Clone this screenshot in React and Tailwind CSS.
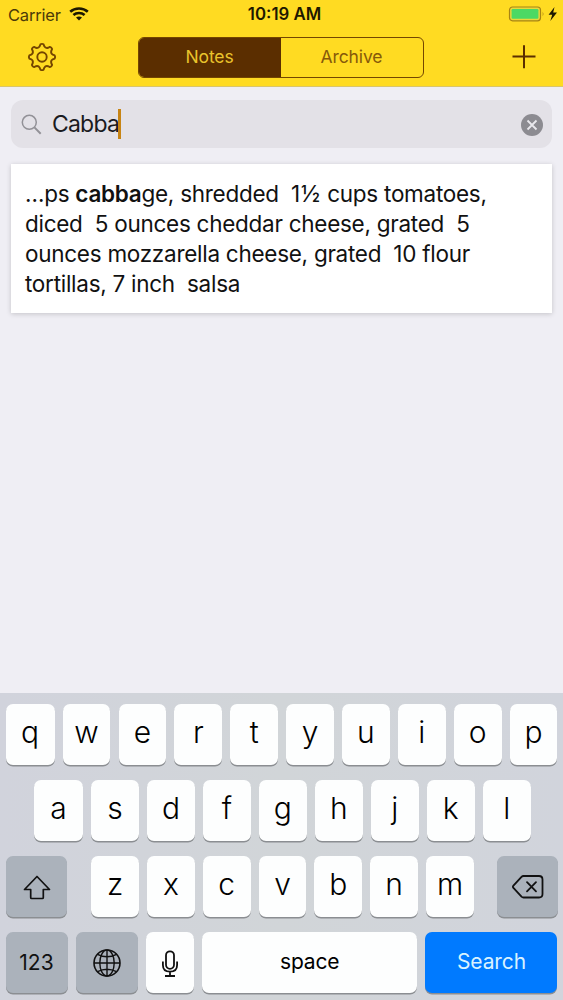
import React, { useState } from "react";

const ROW_ONE = ["q", "w", "e", "r", "t", "y", "u", "i", "o", "p"];
const ROW_TWO = ["a", "s", "d", "f", "g", "h", "j", "k", "l"];
const ROW_THREE = ["z", "x", "c", "v", "b", "n", "m"];

// eight teeth with soft valleys between them
function gearPath(cx, cy) {
  const at = (r, deg) => {
    const a = (deg * Math.PI) / 180;
    return `${(cx + r * Math.cos(a)).toFixed(2)} ${(cy + r * Math.sin(a)).toFixed(2)}`;
  };
  let d = `M${at(12.8, -7)}`;
  for (let i = 0; i < 8; i++) {
    const t = i * 45;
    d += `Q${at(13.6, t)} ${at(12.8, t + 7)}L${at(11, t + 12)}Q${at(9.3, t + 22.5)} ${at(11, t + 33)}L${at(12.8, t + 38)}`;
  }
  return d + "Z";
}

function GearIcon() {
  return (
    <svg width="30" height="30" viewBox="0 0 30 30" fill="none" stroke="#744600" strokeWidth="1.9" strokeLinejoin="round">
      <path d={gearPath(15, 15)} />
      <circle cx="15" cy="15" r="4.7" />
    </svg>
  );
}

function WifiIcon() {
  return (
    <svg width="20" height="14" viewBox="0 0 20 14" fill="none" stroke="#1d1800" strokeWidth="2.6">
      <path d="M1.2 4.7C6 .4 14 .4 18.8 4.7" />
      <path d="M4.400 8C7.500 5.300 12.500 5.300 15.600 8" />
      <path d="M10 13.500L7 10.600Q10 8.200 13 10.600Z" fill="#1d1800" stroke="none" />
    </svg>
  );
}

function BatteryIcon() {
  return (
    <svg width="50" height="16" viewBox="0 0 50 16">
      <rect x="1.5" y="1" width="31" height="13.8" rx="3" fill="#e9d83a" stroke="#a88314" strokeWidth="1.2" />
      <rect x="3.6" y="3.1" width="26.8" height="9.6" rx="1.2" fill="#4cd964" />
      <path d="M34.7 5.5q1.6 2.4 0 4.800z" fill="#a88314" />
      <path d="M46.500 1L40.600 8.800H44.200L42.300 15L49 6.600H45.200Z" fill="#1d1800" />
    </svg>
  );
}

function ShiftIcon() {
  return (
    <svg width="28" height="26" viewBox="0 0 28 26" fill="none" stroke="#111" strokeWidth="1.7" strokeLinejoin="round">
      <path d="M14 1.500L26.500 14.500H20.300V22.500Q20.300 23.500 19.300 23.500H8.700Q7.700 23.500 7.700 22.500V14.500H1.500Z" />
    </svg>
  );
}

function DeleteIcon() {
  return (
    <svg width="32" height="24" viewBox="0 0 32 24" fill="none" stroke="#111" strokeWidth="1.8" strokeLinejoin="round" strokeLinecap="round">
      <path d="M11.500 1H27Q30.500 1 30.500 4.500V19Q30.500 22.500 27 22.500H11.500Q10.300 22.500 9.500 21.700L1.200 12.700Q.6 11.800 1.200 10.900L9.500 1.800Q10.300 1 11.500 1Z" />
      <path d="M15 7.200L24 16.400M24 7.200L15 16.400" />
    </svg>
  );
}

function GlobeIcon() {
  return (
    <svg width="28" height="28" viewBox="0 0 28 28" fill="none" stroke="#111" strokeWidth="1.4">
      <circle cx="14" cy="14" r="13" strokeWidth="1.6" />
      <ellipse cx="14" cy="14" rx="7.2" ry="13" />
      <path d="M14 1V27M1 14H27M4.500 5.300Q14 10.300 23.500 5.300M4.500 22.700Q14 17.700 23.500 22.700" />
    </svg>
  );
}

function MicIcon() {
  return (
    <svg width="18" height="28" viewBox="0 0 18 28" fill="none" stroke="#111" strokeWidth="1.8">
      <rect x="5" y="1.300" width="8" height="17.500" rx="4" />
      <path d="M1.900 11.500V15Q1.900 21.700 9 21.700Q16.100 21.700 16.100 15V11.500M9 22V26M4 26H14" />
    </svg>
  );
}

function LetterKey({ letter, onPress }) {
  return (
    <button
      onClick={() => onPress(letter)}
      className="flex h-[61px] w-[47.700px] shrink-0 items-center justify-center rounded-[7px] bg-[#fdfefe] pb-[6px] text-[30px] leading-none font-[350] text-black shadow-[0_1.500px_0_#8b8e92]"
    >
      {letter}
    </button>
  );
}

export default function App() {
  const [query, setQuery] = useState("Cabba");
  const [tab, setTab] = useState("notes");

  const press = (letter) => setQuery(query + letter);
  const tabClass = (name) =>
    tab === name ? "flex-1 bg-[#5b2e00] text-[#e9c32c]" : "flex-1 text-[#86590a]";

  return (
    <div className="flex h-[1000px] w-[563px] flex-col overflow-hidden bg-[#efeef4] font-['Inter',sans-serif]">
      <header className="h-[87px] shrink-0 border-b border-[#d9c56c] bg-[#ffdb22]">
        <div className="grid h-7 grid-cols-3 items-center pr-[5px] pl-2">
          <div className="flex items-center gap-2 text-[16.500px] tracking-[-0.200px] text-[#4c3a08]">
            <span className="pt-[2px]">Carrier</span>
            <WifiIcon />
          </div>
          <div className="pt-[2px] pl-[3px] text-center text-[16.800px] font-semibold text-[#1d1800]">10:19 AM</div>
          <div className="flex justify-end">
            <BatteryIcon />
          </div>
        </div>
        <div className="flex h-[58px] items-center justify-between pr-[26px] pl-[27px]">
          <button aria-label="Settings"><GearIcon /></button>
          <div className="mr-[7px] flex h-[41px] w-[286px] overflow-hidden rounded-[6px] border-[1.500px] border-[#744600] text-[17.500px] tracking-[-0.100px]">
            <button onClick={() => setTab("notes")} className={tabClass("notes")}>Notes</button>
            <button onClick={() => setTab("archive")} className={tabClass("archive")}>Archive</button>
          </div>
          <button aria-label="New note">
            <svg width="26" height="26" viewBox="0 0 26 26" stroke="#5b2e00" strokeWidth="2">
              <path d="M13 1.200V24.200M1.500 12.500H24.500" />
            </svg>
          </button>
        </div>
      </header>

      <main className="flex-1 px-[11px] pt-[13px]">
        <div className="flex h-[48px] items-center rounded-[12px] bg-[#e3e1e7] pr-[9px] pl-[10px]">
          <svg width="21" height="21" viewBox="0 0 21 21" fill="none" stroke="#929197" strokeWidth="1.5">
            <circle cx="8.300" cy="8.300" r="7" />
            <path d="M13.400 13.400L19.700 19.700" strokeWidth="2" />
          </svg>
          <span className="ml-[10px] pt-px text-[23px] tracking-[-0.800px] text-[#1b1b1f]">{query}</span>
          <span className="-ml-px h-[30px] w-[3px] bg-[#c78414]" />
          <button onClick={() => setQuery("")} aria-label="Clear" className="mt-[2px] ml-auto">
            <svg width="22" height="22" viewBox="0 0 22 22" fill="none">
              <circle cx="11" cy="11" r="11" fill="#8c8b91" />
              <path d="M6.500 6.500L15.500 15.500M15.500 6.500L6.500 15.500" stroke="#e9e8ed" strokeWidth="1.800" />
            </svg>
          </button>
        </div>

        <article className="mt-4 h-[149px] bg-white pt-[15px] pl-[14px] text-[22.500px] leading-[30px] tracking-[-0.270px] whitespace-pre text-[#111] shadow-[0_1px_5px_rgba(0,0,0,0.180)]">
          <p>…ps <b className="font-semibold">cabba</b>ge, shredded{"  "}<span className="tracking-[1px]">1½</span> cups tomatoes,</p>
          <p>diced{"  "}5 ounces cheddar cheese, grated{"  "}5</p>
          <p>ounces mozzarella cheese, grated{"  "}10 flour</p>
          <p>tortillas, 7 inch{"  "}salsa</p>
        </article>
      </main>

      <section className="flex h-[307px] shrink-0 flex-col gap-[15px] bg-linear-to-r from-[#d1d3dc] via-[#d1d5d8] to-[#d1d4dc] px-[5.500px] pt-[11px]">
        <div className="flex justify-between *:first:w-[49px]">
          {ROW_ONE.map((l) => <LetterKey key={l} letter={l} onPress={press} />)}
        </div>
        <div className="flex justify-between pr-[27px] pl-[28.500px] *:first:w-[49px]">
          {ROW_TWO.map((l) => <LetterKey key={l} letter={l} onPress={press} />)}
        </div>
        <div className="flex justify-between">
          <button aria-label="Shift" className="flex h-[61px] w-[61px] items-center justify-center rounded-[7px] bg-[#abb2bb] pt-[2px] pl-[2px] shadow-[0_1.500px_0_#8b8e92]">
            <ShiftIcon />
          </button>
          <div className="flex gap-[8.150px] pl-[2px]">
            {ROW_THREE.map((l) => <LetterKey key={l} letter={l} onPress={press} />)}
          </div>
          <button onClick={() => setQuery(query.slice(0, -1))} aria-label="Delete" className="flex h-[61px] w-[61px] items-center justify-center rounded-[7px] bg-[#abb2bb] pt-[1px] pl-px shadow-[0_1.500px_0_#8b8e92]">
            <DeleteIcon />
          </button>
        </div>
        <div className="flex h-[61px] justify-between text-[21px]">
          <button className="w-[62px] rounded-[7px] bg-[#abb2bb] text-[#111] shadow-[0_1.500px_0_#8b8e92]">123</button>
          <button aria-label="Keyboard" className="flex w-[62px] items-center justify-center rounded-[7px] bg-[#abb2bb] shadow-[0_1.500px_0_#8b8e92]">
            <GlobeIcon />
          </button>
          <button aria-label="Dictate" className="flex w-[47.700px] items-center justify-center rounded-[7px] bg-[#fdfefe] pt-[2px] shadow-[0_1.500px_0_#8b8e92]">
            <MicIcon />
          </button>
          <button onClick={() => press(" ")} className="w-[214.800px] rounded-[7px] bg-[#fdfefe] pb-[2px] tracking-[-0.200px] text-black shadow-[0_1.500px_0_#8b8e92]">space</button>
          <button className="w-[132px] rounded-[7px] bg-[#007aff] pb-[2px] tracking-[-0.100px] text-[#d9f2ff] shadow-[0_1.500px_0_#8b8e92]">Search</button>
        </div>
      </section>
    </div>
  );
}
